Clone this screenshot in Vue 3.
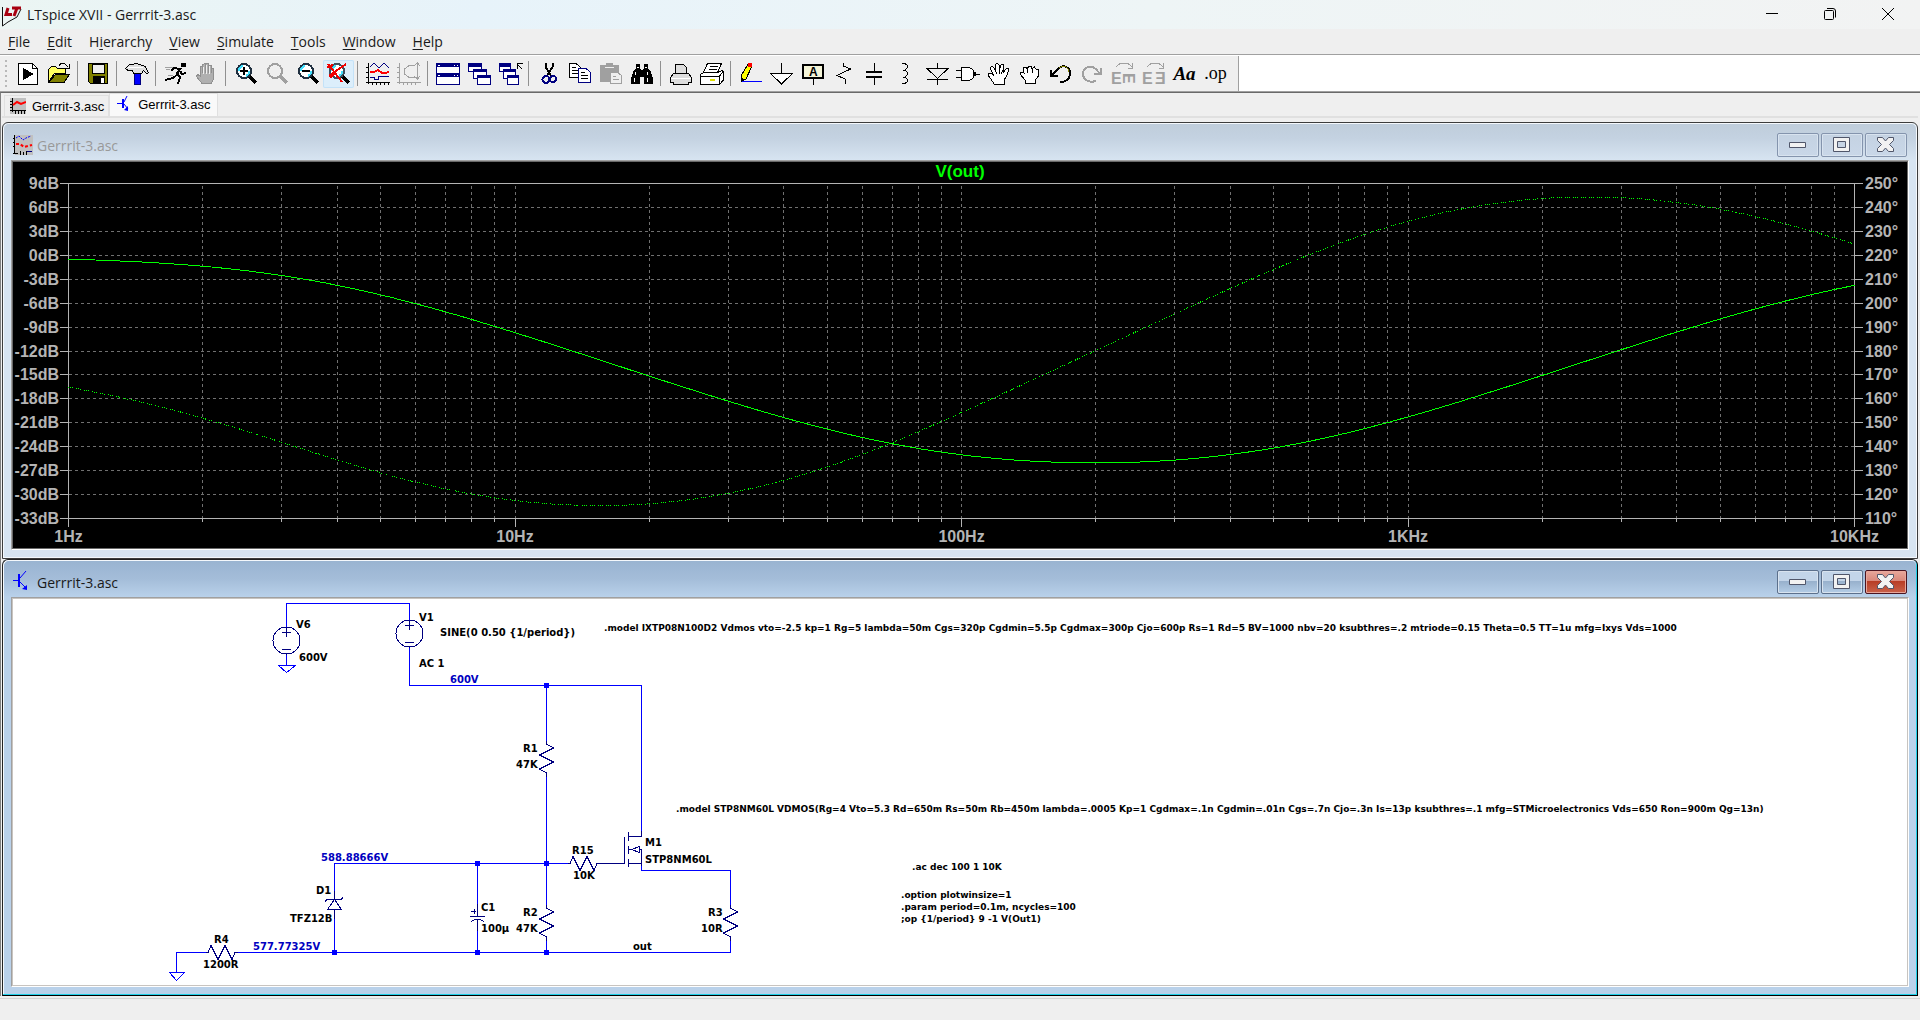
<script setup>
const menus = [
  ['', 'F', 'ile'], ['', 'E', 'dit'], ['H', 'i', 'erarchy'], ['', 'V', 'iew'],
  ['', 'S', 'imulate'], ['', 'T', 'ools'], ['', 'W', 'indow'], ['', 'H', 'elp'],
]

const K = '#000', N = '#000080', G = '#a0a0a0', W = '#fff', O = '#808000'
// Shape: [path, fill, stroke, stroke width]
const lens = (c, f, dark) => [
  ['M15 14L22 21', 'none', c, 4],
  ['M10 2A7 7 0 1 0 10 16A7 7 0 1 0 10 2Z', f, dark, 2],
]
const cyanGlint = ['M5 9A5 5 0 0 1 9 4M15 9A5 5 0 0 1 12 14', 'none', '#40e0ff', 2]
const handOpen = 'M7 22L4 17L1 13L2 11L4 11L7 14L3 6L5 4L7 6L9 10L8 3L10 1L12 3L12 9L14 3L16 2L17 4L16 11L19 7L21 6L22 8L19 15L17 18L17 22Z'
const cascade = [
  ['M1.5 1.5H14.5V9.5H1.5Z', W, N, 1], ['M1 1H15V5H1Z', N, 'none', 0],
  ['M6.5 7.5H19.5V16.5H6.5Z', W, N, 1], ['M6 7H20V10H6Z', N, 'none', 0],
  ['M10.5 13.5H23.5V22.5H10.5Z', W, N, 1], ['M10 13H24V16H10Z', N, 'none', 0],
]
const cascadeBack = [
  ['M1.5 1.5H12.5V9.5H1.5Z', W, N, 1], ['M1 1H13V5H1Z', N, 'none', 0],
  ['M5.5 7.5H17.5V16.5H5.5Z', W, N, 1], ['M5 7H18V10H5Z', N, 'none', 0],
  ['M9.5 13.5H20.5V22.5H9.5Z', W, N, 1], ['M9 13H21V16H9Z', N, 'none', 0],
  ['M24.5 7.5L19 2M19.5 7V1.5H25', 'none', K, 1],
]

const groups = [
  [
    { t: 'New schematic', p: [['M2.5 1.5H16.5L21.5 6.5V22.5H2.5Z', W, K, 1], ['M16.5 1.5V6.5H21.5', 'none', K, 1], ['M7 6L18 12L7 18Z', K, 'none', 0]] },
    { t: 'Open', p: [['M1.5 20V7.5L4.5 4.5H8.5L10.5 6.5H18.5V11.5L7 12Z', '#ffff60', K, 1], ['M1.5 20.5L8.5 12.5H22.5L17 20.5Z', O, K, 1], ['M12 3.5C14 0 19 1 20.5 5M17 6H22V2', 'none', K, 1]] },
  ],
  [{ t: 'Save', p: [['M2.5 1.5H21.5V21.5H4.5L2.5 19.5Z', O, K, 1], ['M6 2H18V11H6Z', '#efefef', K, 1], ['M7 14H19V22H7Z', K, 'none', 0], ['M15 16H18V21H15Z', W, 'none', 0]] }],
  [{ t: 'Control panel', p: [['M9.5 22.5V11H15.5V22.5Z', '#0000ff', N, 1], ['M0.5 6.5L4 3L12 1.5L20 4.5L23.5 10.5L22 12L18.5 8.5L16.5 11.5H9L7 8L3 8.5Z', '#e0e0e0', K, 1], ['M3 5.5H18', 'none', W, 1]] }],
  [
    { t: 'Run', p: [['M1 5H10M2 7H6M4 13H9', 'none', G, 1], ['M17 1H22V5H17Z', K, 'none', 0], ['M17 6L13 11L16 15L14 22M14 12L9 16L1 18M16 7L10 6L7 9M16 9L18 12L22 11', 'none', K, 2]] },
    { t: 'Halt', p: [['M7 21.5L1.5 14.5L2.5 12.5L5.5 14V4.5L7.5 4V11V2.5L10.5 1.5V11V1.5H13.5V11V3.5H16V11V6.5H18.5V17L16.5 21.5Z', '#b0b0b0', '#909090', 1], ['M8.5 5V12M11.5 3V12M14.5 4V12', 'none', '#efefef', 1]] },
  ],
  [
    { t: 'Zoom in', p: [...lens(K, W, '#203040'), cyanGlint, ['M6 9H14M10 5V13', 'none', K, 2]] },
    { t: 'Zoom back', p: lens(G, '#efefef', G) },
    { t: 'Zoom out', p: [...lens(K, W, '#203040'), cyanGlint, ['M6 9H14', 'none', K, 2]] },
    { t: 'Zoom full extents', hot: true, p: [...lens(K, W, '#405060'), cyanGlint, ['M1 2L15 20M2 14L19 2M0 5L6 3M3 16L7 12', 'none', '#f00000', 2]] },
  ],
  [
    { t: 'Autorange', p: [['M2.5 1V22M0 20.5H24M0 5.5H3M0 10.5H3M0 15.5H3M6.5 20V23M10.5 20V23M14.5 20V23M18.5 20V23M22.5 20V23', 'none', K, 1], ['M4 5L8 1L13 6L18 1L23 6', 'none', N, 1], ['M4 10H8L12 8L16 11H19L23 10', 'none', '#f00', 2], ['M4 15.5H8V17.5H12V14.5H23', 'none', N, 1]] },
    { t: 'Plot settings', p: [['M2.5 1V22M0 20.5H24M0 5.5H3M0 10.5H3M0 15.5H3M6.5 20V23M10.5 20V23M14.5 20V23M18.5 20V23', 'none', G, 1], ['M20.5 1V17M17 4L20.5 1L23 4M17 14L20.5 17L23 14M18 3.5H12L7.5 7V12L12 15.5H18', 'none', G, 1]] },
  ],
  [
    { t: 'Tile windows', p: [['M0.5 1.5H23.5V22.5H0.5Z', W, N, 1], ['M0 1H24V5H0ZM0 11H24V15H0Z', N, 'none', 0], ['M2 3H4M18 3H19M21 3H22M2 13H4M18 13H19M21 13H22', 'none', W, 1]] },
    { t: 'Cascade windows', p: cascade },
    { t: 'Close all windows', p: cascadeBack },
  ],
  [
    { t: 'Cut', p: [['M8.5 1V5L12 10L14 14M15.5 1V5L12 10L10 14', 'none', K, 2], ['M9 14A3 3 0 1 0 9 21A3 3 0 0 0 9 14ZM16 14A3 3 0 1 0 16 20A3 3 0 0 0 16 14Z', 'none', N, 2]] },
    { t: 'Copy', p: [['M1.5 1.5H8L12.5 5.5V15.5H1.5Z', W, K, 1], ['M4 5.5H8M4 8.5H10M4 11.5H10', 'none', K, 1], ['M10.5 6.5H18L22.5 10.5V20.5H10.5Z', W, N, 1], ['M13 10.5H17M13 13.5H20M13 16.5H20', 'none', K, 1]] },
    { t: 'Paste', p: [['M1 3H7V1H14V3H20V20H1Z', G, 'none', 0], ['M6 5.5H15', 'none', '#efefef', 1], ['M11.5 10.5H18.5L22.5 13.5V21.5H11.5Z', '#efefef', G, 1], ['M14 14.5H17M14 17.5H20', 'none', G, 1]] },
    { t: 'Find', p: [['M6 2H10V6L11 8H13L14 6V2H18V6L21 10L23 17V22H14V15H10V22H1V17L3 10L6 6Z', K, 'none', 0], ['M7 5H9M15 5H17M4 16V20M17 16V20M6 10L5 13M17 10V13', 'none', W, 1]] },
  ],
  [
    { t: 'Print', p: [['M6.5 2.5H14.5L17.5 5.5V12H6.5Z', '#ddd', K, 1], ['M4.5 11.5L1.5 15.5V20.5H4.5V22.5H19.5V20.5H22.5V15.5L19.5 11.5Z', '#ddd', K, 1], ['M2 16.5H22', 'none', W, 1]] },
    { t: 'Print preview', p: [['M7.5 1.5H21.5L17.5 10.5H3.5Z', W, K, 1], ['M10 4.5H18M9 7.5H17', 'none', K, 1], ['M0.5 12.5L4 10.5H17.5L22 8.5L23.5 10V18L19.5 22.5H0.5Z', W, K, 1], ['M1 14.5H19V22M19 14.5L23 10', 'none', K, 1], ['M10 17.5H15', 'none', '#e0e000', 2]] },
  ],
  [
    { t: 'Wire', p: [['M2 19.5H23', 'none', '#0000ff', 1], ['M9 2L13 4L7 17L2 19L2 14Z', '#ffff00', K, 1], ['M9 1H13V5H9Z', '#f00', 'none', 0], ['M2 15L5 17L2 20Z', K, 'none', 0]] },
    { t: 'Ground', p: [['M11.5 1V11.5', 'none', K, 1], ['M0.5 11.5H22.5L11.5 22Z', W, K, 1]] },
    { t: 'Label net', tx: [['A', 8, 14, 12, '']], p: [['M2 3H22V16H2Z', '#f4f4d8', K, 2], ['M12.5 17V23', 'none', K, 1]] },
    { t: 'Resistor', p: [['M11.5 1V4L18.5 7L5 13.5L13 17V22', 'none', K, 1]] },
    { t: 'Capacitor', p: [['M11.5 1V10M11.5 15V23', 'none', K, 1], ['M3 10H19M3 15H19', 'none', K, 2]] },
    { t: 'Inductor', p: [['M8 1.5H11L13 3V6L11 8H9M11 8L13 10V13L11 15H9M11 15L13 17V20L11 21.5H8', 'none', K, 1]] },
    { t: 'Diode', p: [['M12.5 1V7M12.5 17V23M2 6.5H23L12.5 16.5ZM2 17.5H23', 'none', K, 1]] },
    { t: 'Component', p: [['M0 8.5H6M0 15.5H6M18 12H24', 'none', K, 1], ['M5.5 5.5H12C20 6 20 18 12 18.5H5.5Z', W, K, 1], ['M18 10V14', 'none', K, 3]] },
    { t: 'Move', p: [[handOpen, W, K, 1], ['M7 6L10 12M12 8V12M16 8L14 12', 'none', K, 1]] },
    { t: 'Drag', p: [['M7 21.5V18L2.5 12.5L3 10.5L6 11L5.5 6L8 5L9.5 7L10.5 4H13L14 7L16.5 5L18 7L20.5 8V14L17.5 18V21.5Z', W, K, 1], ['M9.5 7V11M14 7V11', 'none', K, 1]] },
    { t: 'Undo', p: [['M2 8V14H9M3 13L9 7C15 1 22 6 21 13C20 18 17 20 11 20', 'none', K, 2], ['M10 6C15 2 20 6 20 10', 'none', O, 1]] },
    { t: 'Redo', p: [['M21 6V12H14M20 12L16 7C10 2 2 6 3 13C4 18 9 21 16 19', 'none', G, 2]] },
    { t: 'Rotate', tx: [['E', 0, 22, 16, '', G], ['E', 12, 11, 16, 'rotate(90 12 11)', G]], p: [['M5 5L9 1.5H17L21 5M21 1V6H17', 'none', G, 1]] },
    { t: 'Mirror', tx: [['E', 0, 22, 16, '', G], ['Ǝ', 13, 22, 16, '', G]], p: [['M5 5L9 1.5H17L21 5M21 1V6H17', 'none', G, 1]] },
    { t: 'Text', word: 'Aa', cls: 'slant' },
    { t: 'SPICE directive', word: '.op', cls: 'upright' },
  ],
]

const decibels = Array.from({ length: 15 }, (_, i) => 9 - 3 * i)
const xOf = (f) => 68.5 + 446.5 * Math.log10(f)
const yRow = (i) => Math.round(183 + (335 / 14) * i) + 0.5
const minor = []
for (let d = 0; d < 4; d++) {
  for (let m = 1; m < 10; m++) {
    if (d || m > 1) minor.push({ x: Math.floor(xOf(m * 10 ** d)) + 0.5, major: m === 1 })
  }
}
const freqLabels = ['1Hz', '10Hz', '100Hz', '1KHz', '10KHz'].map((t, i) => ({ t, x: xOf(10 ** i) }))

// Two-pole, two-zero response, symmetric about 200 Hz
const magPts = [], phasePts = []
for (let i = 0; i <= 400; i++) {
  const f = 10 ** (i / 100)
  const poles = [3.5, 11100], zeros = [80, 494]
  const db = (a) => a.reduce((s, c) => s + 10 * Math.log10(1 + (f / c) ** 2), 0)
  const ph = (a) => a.reduce((s, c) => s + (Math.atan(f / c) * 180) / Math.PI, 0)
  const mag = -0.15 + db(zeros) - db(poles)
  const phase = 180 + ph(zeros) - ph(poles)
  magPts.push(`${xOf(f).toFixed(1)},${(183.5 + ((9 - mag) * 335) / 42).toFixed(1)}`)
  phasePts.push(`${xOf(f).toFixed(1)},${(183.5 + ((250 - phase) * 335) / 140).toFixed(1)}`)
}

const zigV = (x, y) => `M${x} ${y}v3l7 4l-14 7l14 7l-14 7l7 4v4`
const zigH = (x, y) => `M${x} ${y}h2l3 -7l7 14l7 -14l7 14l3 -7h3`
const wires = [
  'M286.5 627V603.5H409.5V620', 'M286.5 654V665.5', 'M409.5 647V685.5H641.5V831',
  'M546.5 685V741', 'M546.5 772V905', 'M334.5 891V863.5H568', 'M641.5 866V870.5H730.5V905',
  'M546.5 936V952', 'M334.5 919V952', 'M477.5 863V904', 'M477.5 931V952',
  'M730.5 936V952.5H238', 'M206 952.5H176.5V972.5',
  'M278.5 665.5H295.5L286.5 672.5Z', 'M169.5 972.5H184.5L176.5 980.5Z',
]
const parts = [
  zigV(546.5, 741), zigV(546.5, 905), zigV(730.5, 905), zigH(568, 863.5), zigH(206, 952.5),
  'M600 863.5H624.5V836.5', 'M641.5 831V836.5H628.5M628.5 832V841M628.5 846V854M628.5 859V867M628.5 863.5H641.5M641.5 866V849.5H639',
  'M629 849.5H632L639 846.5V852.5L632 849.5',
  'M334.5 891V899M325 901.5L327 899.5H341L343 897.5M334.5 899.5L341.5 909.5H327.5ZM334.5 909V919',
  'M477.5 904V916.5M470 916.5H485M477.5 919V931M471 921.5Q477.5 917 484 921.5M471 911.5H476M474.5 909V914',
  'M282 632.5H291M286.5 628V637M282 649.5H291', 'M405 625.5H414M409.5 621V630M405 642.5H414',
]
const nodes = [[546, 685], [546, 863], [477, 863], [546, 952], [477, 952], [334, 952]]
const labels = [
  ['V6', 296, 628], ['600V', 299, 661], ['V1', 419, 621], ['SINE(0 0.50 {1/period})', 440, 636], ['AC 1', 419, 667],
  ['600V', 450, 683, 1], ['R1', 523, 752], ['47K', 516, 768], ['R15', 572, 854], ['10K', 573, 879],
  ['M1', 645, 846], ['STP8NM60L', 645, 863], ['R2', 523, 916], ['47K', 516, 932], ['R3', 708, 916], ['10R', 701, 932],
  ['out', 633, 950], ['588.88666V', 321, 861, 1], ['D1', 316, 894], ['TFZ12B', 290, 922], ['C1', 481, 911], ['100µ', 481, 932],
  ['R4', 214, 943], ['1200R', 203, 968], ['577.77325V', 253, 950, 1],
]
const directives = [
  ['.model IXTP08N100D2 Vdmos vto=-2.5 kp=1 Rg=5 lambda=50m Cgs=320p Cgdmin=5.5p Cgdmax=300p Cjo=600p Rs=1 Rd=5 BV=1000 nbv=20 ksubthres=.2 mtriode=0.15 Theta=0.5 TT=1u mfg=Ixys Vds=1000', 604, 631],
  ['.model STP8NM60L VDMOS(Rg=4 Vto=5.3 Rd=650m Rs=50m Rb=450m lambda=.0005 Kp=1 Cgdmax=.1n Cgdmin=.01n Cgs=.7n Cjo=.3n Is=13p ksubthres=.1 mfg=STMicroelectronics Vds=650 Ron=900m Qg=13n)', 676, 812],
  ['.ac dec 100 1 10K', 912, 870], ['.option plotwinsize=1', 901, 898],
  ['.param period=0.1m, ncycles=100', 901, 910], [';op {1/period} 9 -1 V(Out1)', 901, 922],
]
</script>

<template>
  <div class="app">
    <header class="titlebar">
      <svg class="logo" viewBox="0 0 22 24" aria-hidden="true">
        <path d="M2.5 4V23L8 19L17 14L21 6" fill="none" stroke="#111" />
        <path d="M8 5L6 11.5H12M12 5H21M17 5L14 13" fill="none" stroke="#a80010" stroke-width="3" />
      </svg>
      <h1>LTspice XVII - Gerrrit-3.asc</h1>
      <div class="sys">
        <button aria-label="Minimize"><svg viewBox="0 0 12 12"><path d="M0 5.5H12" /></svg></button>
        <button aria-label="Restore"><svg viewBox="0 0 12 12"><path d="M0.5 3.5Q0.5 2.5 1.5 2.5H8.5Q9.5 2.5 9.5 3.5V10.5Q9.5 11.5 8.5 11.5H1.5Q0.5 11.5 0.5 10.5ZM3 0.5H9Q11.5 0.5 11.5 3V9.5" /></svg></button>
        <button aria-label="Close"><svg viewBox="0 0 12 12"><path d="M0 0L12 12M12 0L0 12" /></svg></button>
      </div>
    </header>

    <nav class="menubar">
      <button v-for="m in menus" :key="m.join('')">{{ m[0] }}<u>{{ m[1] }}</u>{{ m[2] }}</button>
    </nav>

    <div class="toolrow">
      <div class="toolbar" role="toolbar">
        <span class="grip"></span>
        <div v-for="(g, gi) in groups" :key="gi" class="group">
          <button v-for="b in g" :key="b.t" :aria-label="b.t" :class="{ hot: b.hot }">
            <span v-if="b.word" :class="b.cls">{{ b.word }}</span>
            <svg v-else viewBox="0 0 24 24">
              <path v-for="(s, si) in b.p" :key="si" :d="s[0]" :fill="s[1]" :stroke="s[2]" :stroke-width="s[3]" />
              <text v-for="(x, xi) in b.tx || []" :key="'t' + xi" :x="x[1]" :y="x[2]" :font-size="x[3]" :transform="x[4]" :fill="x[5] || '#000'">{{ x[0] }}</text>
            </svg>
          </button>
        </div>
      </div>
    </div>

    <main class="workspace">
      <div class="tabs" role="tablist">
        <button role="tab" aria-selected="false">
          <svg viewBox="0 0 16 16"><path d="M0 0H16V16H0Z" fill="#c0c0c0" /><path d="M2.5 0V14M0 12.5H16M0 3.5H3M0 6.5H3M0 9.5H3M5.5 12V16M8.5 12V16M11.5 12V16M14.5 12V16" stroke="#000" fill="none" /><path d="M3 7L7 4L11 6L16 4" stroke="#f00" stroke-width="2" fill="none" /></svg>
          Gerrrit-3.asc
        </button>
        <button role="tab" aria-selected="true" class="on">
          <svg viewBox="0 0 16 16"><path d="M0 7.5H6M7 8L11 13M7 6L10 0" stroke="#00f" fill="none" /><path d="M6 3V12" stroke="#00f" stroke-width="2" /><path d="M11 15V10L7 14Z" fill="#00f" /></svg>
          Gerrrit-3.asc
        </button>
      </div>

      <section class="child">
        <div class="caption">
          <svg class="cicon" viewBox="0 0 20 20"><path d="M2 0H20V20H2Z" fill="#c0c0c0" /><path d="M1.5 0V18M0 3.5H2M0 7.5H2M0 11.5H2M0 18.5H5M7.5 16V20M10.5 17V20M13.5 16V20" stroke="#000" fill="none" /><path d="M3 3L6 1L10 5L13 3L18 1" stroke="#00f" stroke-dasharray="2 1" fill="none" /><path d="M3 9H7L11 12L19 10" stroke="#f00" stroke-width="2" stroke-dasharray="3 2" fill="none" /><path d="M14 16.5H19" stroke="#000080" fill="none" /></svg>
          <h2>Gerrrit-3.asc</h2>
          <div class="ctl">
            <button aria-label="Minimize plot"><svg viewBox="0 0 18 18"><path class="glyph" d="M0.5 6.5H16.5V11.5H0.5Z" /></svg></button>
            <button aria-label="Maximize plot"><svg viewBox="0 0 18 18"><path class="glyph" fill-rule="evenodd" d="M0.5 1.5H16.5V15.5H0.5ZM4.5 5.5V11.5H12.5V5.5Z" /></svg></button>
            <button aria-label="Close plot"><svg viewBox="0 0 18 18"><path class="glyph" d="M0.5 1.5H5.5L8.5 5L11.5 1.5H16.5V4.5L12.5 8.5L16.5 12.5V15.5H11.5L8.5 12L5.5 15.5H0.5V12.5L4.5 8.5L0.5 4.5Z" /></svg></button>
          </div>
        </div>
        <div class="client">
          <svg class="plot" viewBox="13 162 1894 386" role="img" aria-label="Bode plot of V(out)">
            <g class="grid">
              <path v-for="i in 13" :key="i" :d="`M69 ${yRow(i)}H1854`" />
              <path v-for="m in minor" :key="m.x" :d="`M${m.x} 186V518`" />
            </g>
            <g class="axis">
              <path d="M60 183.5H1863M60 518.5H1863M68.5 183V527M1854.5 183V527" />
              <path v-for="i in 13" :key="i" :d="`M60 ${yRow(i)}H68M1854 ${yRow(i)}H1863`" />
              <path v-for="m in minor" :key="m.x" :d="`M${m.x} 518V${m.major ? 527 : 522}`" />
            </g>
            <polyline class="mag" :points="magPts.join(' ')" />
            <polyline class="phase" :points="phasePts.join(' ')" />
            <text class="trace" x="960" y="177">V(out)</text>
            <g class="scale">
              <text v-for="(d, i) in decibels" :key="d" class="end" x="59" :y="yRow(i) + 5.5">{{ d }}dB</text>
              <text v-for="(d, i) in decibels" :key="'p' + d" x="1865" :y="yRow(i) + 5.5">{{ 250 - 10 * i }}°</text>
              <text v-for="f in freqLabels" :key="f.t" class="mid" :x="f.x" y="542">{{ f.t }}</text>
            </g>
          </svg>
        </div>
      </section>

      <section class="child active">
        <div class="caption">
          <svg class="cicon" viewBox="0 0 20 20"><path d="M0 9.5H6M7 11L12 16M7 7L13 0" stroke="#00f" fill="none" /><path d="M6 3V16" stroke="#00f" stroke-width="2" /><path d="M14 19V14L9 18Z" fill="#00f" /></svg>
          <h2>Gerrrit-3.asc</h2>
          <div class="ctl">
            <button aria-label="Minimize schematic"><svg viewBox="0 0 18 18"><path class="glyph" d="M0.5 6.5H16.5V11.5H0.5Z" /></svg></button>
            <button aria-label="Maximize schematic"><svg viewBox="0 0 18 18"><path class="glyph" fill-rule="evenodd" d="M0.5 1.5H16.5V15.5H0.5ZM4.5 5.5V11.5H12.5V5.5Z" /></svg></button>
            <button class="close" aria-label="Close schematic"><svg viewBox="0 0 18 18"><path class="glyph" d="M0.5 1.5H5.5L8.5 5L11.5 1.5H16.5V4.5L12.5 8.5L16.5 12.5V15.5H11.5L8.5 12L5.5 15.5H0.5V12.5L4.5 8.5L0.5 4.5Z" /></svg></button>
          </div>
        </div>
        <div class="client">
          <svg class="schematic" viewBox="13 599 1894 386" role="img" aria-label="Circuit schematic">
            <path v-for="w in wires" :key="w" class="wire" :d="w" />
            <path v-for="p in parts" :key="p" class="part" :d="p" />
            <circle class="part" cx="286.5" cy="640.5" r="13.5" />
            <circle class="part" cx="409.5" cy="633.5" r="13.5" />
            <rect v-for="n in nodes" :key="n.join()" class="node" :x="n[0] - 2" :y="n[1] - 2" width="5" height="5" />
            <text v-for="(l, i) in labels" :key="i" :x="l[1]" :y="l[2]" :class="{ volt: l[3] }">{{ l[0] }}</text>
            <text v-for="d in directives" :key="d[0]" class="directive" :x="d[1]" :y="d[2]">{{ d[0] }}</text>
          </svg>
        </div>
      </section>
    </main>
    <footer class="status"></footer>
  </div>
</template>

<style>
body { margin: 0; background: #efefef; }
</style>

<style scoped>
.app { display: flex; flex-direction: column; min-height: 100vh; background: #efefef; font: 14px "Open Sans", "Noto Sans", sans-serif; color: #1a1a1a; }
button { border: 0; padding: 0; margin: 0; background: none; font: inherit; color: inherit; }
h1, h2 { margin: 0; font-size: 14px; font-weight: 400; }
svg { display: block; }

.titlebar { display: flex; align-items: center; height: 29px; background: linear-gradient(90deg, #ebf5f3, #e7f3fa 25%, #eef5f6 60%, #f2f3f3); }
.logo { width: 22px; height: 24px; margin-right: 5px; }
.sys { display: flex; align-self: flex-start; margin: 0 3px 0 auto; }
.sys button { width: 58px; height: 28px; display: grid; place-items: center; }
.sys svg { width: 12px; height: 12px; fill: none; stroke: #000; overflow: visible; }

.menubar { display: flex; gap: 17px; height: 25px; padding: 0 8px; border-bottom: 1px solid #a0a0a0; }
.menubar u { text-underline-offset: 2px; }

.toolrow { display: flex; background: #fff; height: 36px; border-bottom: 1px solid #a0a0a0; }
.toolbar { display: flex; align-items: center; margin-top: 1px; padding: 0 7px 0 0; background: #efefef; border-right: 1px solid #a0a0a0; }
.grip { width: 2px; height: 27px; margin: 0 5px; background: repeating-linear-gradient(#b8b8b8 0 2px, #efefef 2px 5px); }
.group { display: flex; align-items: center; }
.group + .group::before { content: ""; width: 1px; height: 25px; margin: 0 4px 0 3px; background: #909090; }
.group button { width: 31px; height: 28px; display: grid; place-items: center; }
.group button.hot { background: #dceefb; box-shadow: inset 0 0 0 1px #c4e2f8; border-radius: 2px; }
.group svg { width: 24px; height: 24px; shape-rendering: crispEdges; overflow: visible; }
.group text { font-family: "Liberation Sans", "DejaVu Sans", sans-serif; font-weight: 700; }
.slant { font: italic 700 19px "Liberation Serif", serif; color: #000; }
.upright { font: 400 18px "Liberation Serif", serif; color: #000; }

.workspace { border-top: 1px solid #696969; border-left: 1px solid #808080; padding: 0 2px 0 1px; }
.tabs { display: flex; align-items: flex-end; height: 23px; padding-left: 2px; margin-bottom: 4px; border-bottom: 2px solid #e0e0e0; }
.tabs button { display: flex; align-items: center; gap: 6px; height: 21px; padding: 0 4px 0 5px; font: 13px "Liberation Sans", Arial, sans-serif; color: #000; border: 1px solid #e0e0e0; border-bottom: 0; }
.tabs button.on { height: 23px; padding: 0 7px 2px; gap: 5px; background: #f9f9f9; box-sizing: border-box; }
.tabs svg { width: 16px; height: 16px; }

.child { border: 1px solid #3c3c3c; border-radius: 6px 6px 0 0; padding: 0 8px 8px; background: #d7e4f1; box-shadow: inset 0 0 0 1px #f4f8fc; }
.child.active { border-color: #222; border-right-color: #000; border-bottom-color: #000; background: #b9d1ea; box-shadow: inset -1px -1px 0 #20d0e8, inset 1px 1px 0 #f4f8fc; }
.caption { display: flex; align-items: center; height: 36px; margin: 1px -7px 0; padding: 0 9px; background: linear-gradient(#bfcddb, #c4d2e1 40%, #d7e4f1); border-radius: 5px 5px 0 0; color: #999; }
.active .caption { background: linear-gradient(#99b4d1, #a4bdd9 50%, #b9d1ea); color: #1a1a1a; }
.cicon { width: 20px; height: 20px; margin: 6px 4px 0 0; }
.active .cicon { margin-top: 4px; }
.caption h2 { padding-top: 6px; }
.ctl { display: flex; gap: 2px; margin: 5px 0 0 auto; }
.ctl button { width: 42px; height: 24px; display: grid; place-items: center; border: 1px solid #8494ad; border-radius: 2px; background: linear-gradient(#c4d2e2, #c9d7e8); box-shadow: inset 0 0 0 1px #d8e3ef; }
.active .ctl button { border-color: #5c708c; background: linear-gradient(#c3d5e9 45%, #97b0cc 46%, #b4cde6); }
.active .ctl .close { border-color: #4a1420; background: linear-gradient(#e8a79b, #d9877a 45%, #b83c25 46%, #c9634b); box-shadow: inset 0 0 0 1px #e8a79b; }
.ctl svg { width: 18px; height: 18px; }
.glyph { fill: #f2f2f2; stroke: #50566a; }

.client { border: 1px solid #a0a0a0; border-right-color: #fff; border-bottom-color: #fff; }
.client svg { width: calc(100% - 2px); height: auto; margin: 1px; outline: 1px solid #696969; }
.client .schematic { outline-color: #c8c4c0; }
.plot { background: #000; }
.schematic { background: #fff; }
.grid path { fill: none; stroke: #707070; stroke-dasharray: 3 3; shape-rendering: crispEdges; }
.axis path { fill: none; stroke: #b4b4b4; shape-rendering: crispEdges; }
.mag, .phase { fill: none; stroke: #0f0; shape-rendering: crispEdges; }
.phase { stroke-dasharray: 1 1 1 1 1 3; }
.plot text { font: 700 16px "Liberation Sans", Arial, sans-serif; }
.plot .trace { fill: #0f0; text-anchor: middle; font-size: 17px; }
.scale { fill: #b4b4b4; }
.scale .end { text-anchor: end; }
.scale .mid { text-anchor: middle; }
.wire { fill: none; stroke: #00f; shape-rendering: crispEdges; }
.part { fill: none; stroke: #000080; shape-rendering: crispEdges; }
.node { fill: #00f; }
.schematic text { font: 700 10px "DejaVu Sans", Verdana, sans-serif; fill: #000; }
.schematic .directive { font-size: 9px; }
.schematic .volt { fill: #0000c0; }

.status { flex: 1; min-height: 20px; margin-top: 2px; border-top: 1px solid #d4d4d4; }
</style>
